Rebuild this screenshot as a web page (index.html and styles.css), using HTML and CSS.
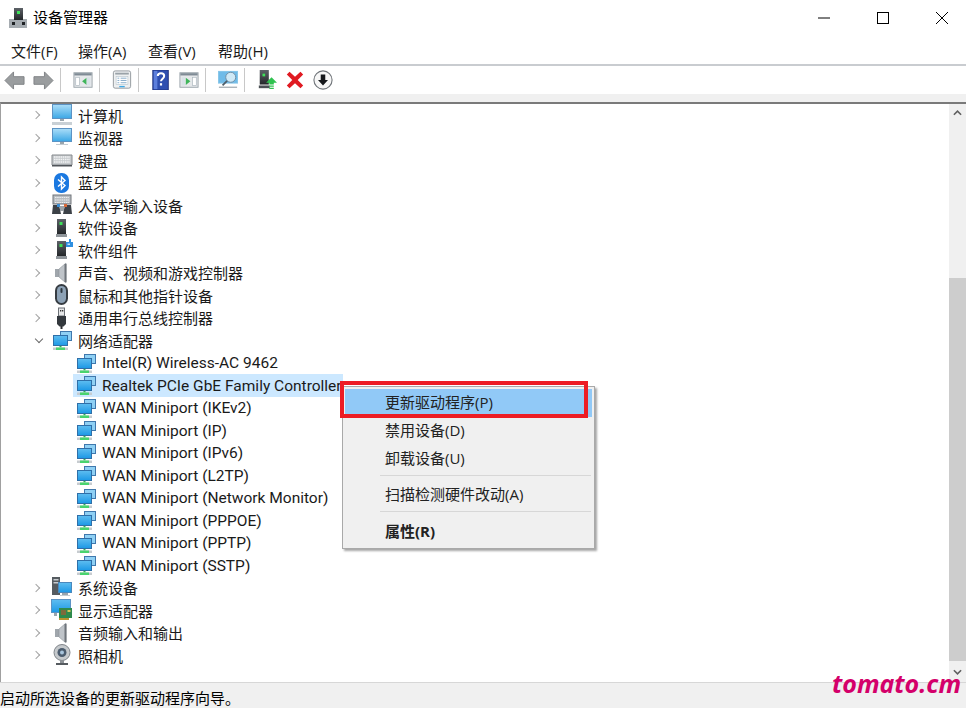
FILE: index.html
```html
<!DOCTYPE html>
<html lang="zh-CN">
<head>
<meta charset="utf-8">
<title>设备管理器</title>
<link rel="stylesheet" href="styles.css">
</head>
<body>
<svg class="defs" width="0" height="0">
  <defs>
    <linearGradient id="scr" x1="0" y1="0" x2="0" y2="1"><stop offset="0" stop-color="#a8dcf8"/><stop offset="1" stop-color="#3fa9e6"/></linearGradient>
    <linearGradient id="scr2" x1="0" y1="0" x2="0" y2="1"><stop offset="0" stop-color="#5cbcf0"/><stop offset="1" stop-color="#1f9ae6"/></linearGradient>
    <linearGradient id="tw" x1="0" y1="0" x2="0" y2="1"><stop offset="0" stop-color="#5d6268"/><stop offset="1" stop-color="#24272a"/></linearGradient>
    <symbol id="i-monitor" viewBox="0 0 22 22">
      <rect x="1" y="1" width="20" height="14" fill="#5c93c4"/><rect x="2" y="2" width="18" height="12" fill="url(#scr)"/>
      <rect x="9" y="15" width="4" height="2" fill="#9aa5ad"/><rect x="5" y="17" width="12" height="1" fill="#c4ccd2"/>
    </symbol>
    <symbol id="i-computer" viewBox="0 0 22 22">
      <rect x="1" y="0" width="20" height="15" fill="#5c93c4"/><rect x="2" y="1" width="18" height="13" fill="url(#scr)"/>
      <rect x="9" y="15" width="4" height="2" fill="#9aa5ad"/><rect x="1" y="18" width="20" height="3" fill="#c9d0d5"/>
    </symbol>
    <symbol id="i-keyboard" viewBox="0 0 22 22">
      <path d="M1 6h20v10H1z" fill="#c6cacd" stroke="#85898d"/><path d="M3 8h16M3 10.500h16M3 13h16" stroke="#f3f4f5" stroke-width="1.300" stroke-dasharray="1.500 .7"/><path d="M1 16h20v1.500H1z" fill="#50555a"/>
    </symbol>
    <symbol id="i-bt" viewBox="0 0 22 22">
      <rect x="3" y="1" width="15" height="20" rx="7" fill="#1a78e0"/><path d="M7 7.500l7 6-3.500 3.500V5l3.500 3.500-7 6" fill="none" stroke="#fff" stroke-width="1.400"/>
    </symbol>
    <symbol id="i-hid" viewBox="0 0 22 22">
      <rect x="2" y="1" width="18" height="9" fill="#b9bec2" stroke="#70757a"/><path d="M4 3.500h14M4 6h14M4 8.500h14" stroke="#eceef0" stroke-dasharray="1.500 .7"/>
      <path d="M1 20l1-9h6l2 9zM21 20l-1-9h-6l-2 9z" fill="#3c4147"/><rect x="6" y="10" width="3" height="3" fill="#3d8ed4"/><rect x="13" y="10" width="3" height="3" fill="#d86a3a"/><rect x="9" y="12" width="4" height="5" fill="#9da3a8"/>
    </symbol>
    <symbol id="i-soft" viewBox="0 0 22 22">
      <rect x="6" y="2" width="9" height="15" fill="url(#tw)"/><rect x="8.500" y="5" width="3" height="3" fill="#3fe05a"/><rect x="5" y="17" width="11" height="3" fill="#90969b"/>
    </symbol>
    <symbol id="i-comp" viewBox="0 0 22 22">
      <rect x="6" y="2" width="9" height="15" fill="url(#tw)"/><rect x="8.500" y="5" width="3" height="3" fill="#3fe05a"/><rect x="5" y="17" width="11" height="3" fill="#90969b"/>
      <path d="M15 3h3V0h2v3h2v5h-7z" fill="#2e8fe0"/><rect x="16.500" y="4.500" width="2.500" height="1.500" fill="#bfe0fa"/>
    </symbol>
    <symbol id="i-speaker" viewBox="0 0 22 22">
      <path d="M4 7h4v8H4z" fill="#a0a6ac"/><path d="M8 7l7-6v20l-7-6z" fill="#bfc4c9" stroke="#8f959b" stroke-width=".6"/><path d="M14.500 2v18" stroke="#6f757b" stroke-width="2"/>
    </symbol>
    <symbol id="i-mouse" viewBox="0 0 22 22">
      <rect x="4" y="0" width="13" height="21" rx="6.500" fill="#363c42"/><rect x="6" y="2" width="9" height="17" rx="4.500" fill="#8da2b6"/><rect x="9.500" y="4" width="2" height="5" rx="1" fill="#2f3840"/>
    </symbol>
    <symbol id="i-usb" viewBox="0 0 22 22">
      <rect x="7.500" y="1" width="6" height="8" fill="#e6e7e8" stroke="#6c7177"/><rect x="9" y="3" width="1.300" height="1.500" fill="#333"/><rect x="11" y="3" width="1.300" height="1.500" fill="#333"/>
      <path d="M6 9h9v8l-2.500 2.500h-4L6 17z" fill="#33383d"/><rect x="9.500" y="19" width="2" height="3" fill="#2a2d30"/>
    </symbol>
    <symbol id="i-net" viewBox="0 0 22 22">
      <rect x="9" y="2" width="12" height="10" fill="#3f78ad"/><rect x="10" y="3" width="10" height="8" fill="#8fd0f4"/>
      <rect x="2" y="6" width="15" height="11" fill="#2f6fa8"/><rect x="3" y="7" width="13" height="9" fill="url(#scr2)"/>
      <rect x="8.500" y="17" width="2" height="1.500" fill="#2fae52"/><rect x="2" y="18.500" width="15" height="2.500" fill="#c7ccd0"/><rect x="5" y="18.500" width="9" height="2.500" fill="#49d46e"/>
    </symbol>
    <symbol id="i-system" viewBox="0 0 22 22">
      <rect x="1" y="0" width="8" height="18" fill="#555b60"/><rect x="2.500" y="2" width="5" height="1.500" fill="#c8ccd0"/><rect x="2.500" y="5" width="5" height="1.500" fill="#c8ccd0"/>
      <rect x="7" y="5" width="14" height="11" fill="#4a88bd"/><rect x="8" y="6" width="12" height="9" fill="url(#scr2)"/><rect x="11" y="16" width="6" height="2" fill="#9aa5ad"/><rect x="9" y="18" width="10" height="1" fill="#c4ccd2"/>
    </symbol>
    <symbol id="i-display" viewBox="0 0 22 22">
      <rect x="0" y="0" width="20" height="14" fill="#5c93c4"/><rect x="1" y="1" width="18" height="12" fill="url(#scr2)"/>
      <rect x="3" y="14" width="3" height="3" fill="#9aa5ad"/><rect x="8" y="9" width="13" height="10" fill="#2f8a4c"/><rect x="10" y="11" width="5" height="5" fill="#7d6b3b"/><rect x="16.500" y="11" width="3" height="2" fill="#d5c75a"/><path d="M8 19h10v2H8z" fill="#b9932f"/>
    </symbol>
    <symbol id="i-camera" viewBox="0 0 22 22">
      <circle cx="11" cy="8.500" r="8" fill="#c5c9cc" stroke="#80858a"/><circle cx="11" cy="8.500" r="4.500" fill="#4b5c6e"/><circle cx="11" cy="8.500" r="2" fill="#a7c4dc"/>
      <path d="M9 16h4v3H9z" fill="#8d9297"/><rect x="5" y="19" width="12" height="2" fill="#565b60"/>
    </symbol>
    <symbol id="i-pane-l" viewBox="0 0 22 22">
      <rect x="1" y="3" width="20" height="16" fill="#e5e8ea" stroke="#9aa3aa"/><rect x="1.500" y="3.500" width="19" height="2.500" fill="#7f8b95"/><rect x="3" y="8" width="4" height="9" fill="#fff" stroke="#a9b4bc" stroke-width=".7"/><path d="M15 8.500v8l-5-4z" fill="#3fb55a"/><rect x="15" y="8" width="4" height="9" fill="#d9e2e8"/>
    </symbol>
    <symbol id="i-pane-r" viewBox="0 0 22 22">
      <rect x="1" y="3" width="20" height="16" fill="#e5e8ea" stroke="#9aa3aa"/><rect x="1.500" y="3.500" width="19" height="2.500" fill="#7f8b95"/><rect x="15" y="8" width="4" height="9" fill="#fff" stroke="#a9b4bc" stroke-width=".7"/><path d="M7.500 8.500v8l5-4z" fill="#3fb55a"/><rect x="3" y="8" width="3.500" height="9" fill="#d9e2e8"/>
    </symbol>
    <symbol id="i-props" viewBox="0 0 22 22">
      <rect x="1.500" y="1" width="19" height="19" rx="2" fill="#eef0f1" stroke="#8d9499"/><rect x="3.500" y="3" width="15" height="2" fill="#9aa2a8"/><rect x="4.500" y="7" width="13" height="9" fill="#fff" stroke="#b8c4cc" stroke-width=".7"/><path d="M6 9h2M9.500 9h6.500M6 11.500h2M9.500 11.500h6.500M6 14h2M9.500 14h6.500" stroke="#7da5c4"/><rect x="8" y="17.500" width="6" height="1.500" fill="#3fa9e6"/>
    </symbol>
    <symbol id="i-help" viewBox="0 0 22 22">
      <rect x="2" y="0" width="17" height="22" fill="#2f4fb0" stroke="#1d2f7a"/><rect x="3" y="1" width="4" height="20" fill="#5d7fdc"/>
      <path d="M7.500 6.500c0-4 7-4 7 0 0 3-3.500 3-3.500 6" fill="none" stroke="#fff" stroke-width="2.200"/><rect x="9.800" y="14.500" width="2.400" height="2.600" fill="#fff"/>
    </symbol>
    <symbol id="i-scan" viewBox="0 0 22 22">
      <rect x="0" y="1" width="22" height="14" fill="#8cc8ea"/><rect x="1" y="2" width="20" height="12" fill="#6fbbe8"/>
      <circle cx="14" cy="8" r="5.500" fill="#cfe9f6" stroke="#6e8aa0"/><path d="M10 12l-5 5" stroke="#4e5d68" stroke-width="2"/><path d="M1 19h20" stroke="#a9b2b8" stroke-width="1.500"/>
    </symbol>
    <symbol id="i-update" viewBox="0 0 22 22">
      <rect x="3" y="0" width="10" height="16" fill="url(#tw)"/><rect x="6" y="4" width="3" height="3" fill="#3fe05a"/><rect x="2" y="17" width="12" height="3" fill="#4b5055"/>
      <path d="M16 8l6 6h-3.500v2h-5v-2H10z" fill="#2fc24f"/><path d="M13.500 17h5v1.500h-5zM13.500 19.500h5V21h-5z" fill="#2fc24f"/>
    </symbol>
    <symbol id="i-x" viewBox="0 0 22 22">
      <path d="M2 5l3-3 6 5.500L17 2l3 3-6 6 6 6-3 3-6-5.500L5 20l-3-3 6-6z" fill="#e01a22"/>
    </symbol>
    <symbol id="i-down" viewBox="0 0 22 22">
      <circle cx="11" cy="11" r="10" fill="#f7f7f7" stroke="#70757a" stroke-width="1.200"/><path d="M8.500 5h5v6h3L11 17l-5.500-6h3z" fill="#15181b"/>
    </symbol>
  </defs>
</svg>

<div class="window">
  <header class="titlebar">
    <svg class="app-icon" viewBox="0 0 20 20"><rect x="6" y="0" width="9" height="12" fill="url(#tw)"/><rect x="9" y="3" width="3" height="3" fill="#3fe05a"/><path d="M1 11h5v1h9v-1h4v9H1z" fill="#a6acb1"/><rect x="4" y="14" width="3" height="3" fill="#1e2124"/><rect x="14" y="14" width="3" height="3" fill="#1e2124"/></svg>
    <span class="title">设备管理器</span>
    <div class="controls">
      <svg class="ctl" viewBox="0 0 12 12"><path d="M0 6h12" stroke="#000"/></svg>
      <svg class="ctl" viewBox="0 0 12 12"><rect x=".5" y=".5" width="11" height="11" fill="none" stroke="#000"/></svg>
      <svg class="ctl" viewBox="0 0 12 12"><path d="M0 0l12 12M12 0L0 12" stroke="#000"/></svg>
    </div>
  </header>
  <nav class="menubar">
    <span class="menu-item">文件(F)</span>
    <span class="menu-item">操作(A)</span>
    <span class="menu-item">查看(V)</span>
    <span class="menu-item">帮助(H)</span>
  </nav>
  <div class="toolbar">
    <svg class="arrow" viewBox="0 0 22 22"><path d="M1 11l9-9v5h11v8H10v5z" fill="#9a9d9f" stroke="#7f8285"/></svg>
    <svg class="arrow next" viewBox="0 0 22 22"><path d="M21 11l-9-9v5H1v8h11v5z" fill="#9a9d9f" stroke="#7f8285"/></svg>
    <span class="sep"></span>
    <svg class="tool"><use href="#i-pane-l"/></svg>
    <span class="sep"></span>
    <svg class="tool"><use href="#i-props"/></svg>
    <span class="sep"></span>
    <svg class="tool"><use href="#i-help"/></svg>
    <svg class="tool tight"><use href="#i-pane-r"/></svg>
    <span class="sep"></span>
    <svg class="tool"><use href="#i-scan"/></svg>
    <span class="sep"></span>
    <svg class="tool"><use href="#i-update"/></svg>
    <svg class="tool tight"><use href="#i-x"/></svg>
    <svg class="tool tight"><use href="#i-down"/></svg>
  </div>
  <div class="strip"></div>
  <main class="content">
    <ul class="tree">
      <li class="row"><span class="chev right"></span><svg class="icon"><use href="#i-computer"/></svg><span class="lbl">计算机</span></li>
      <li class="row"><span class="chev right"></span><svg class="icon"><use href="#i-monitor"/></svg><span class="lbl">监视器</span></li>
      <li class="row"><span class="chev right"></span><svg class="icon"><use href="#i-keyboard"/></svg><span class="lbl">键盘</span></li>
      <li class="row"><span class="chev right"></span><svg class="icon"><use href="#i-bt"/></svg><span class="lbl">蓝牙</span></li>
      <li class="row"><span class="chev right"></span><svg class="icon"><use href="#i-hid"/></svg><span class="lbl">人体学输入设备</span></li>
      <li class="row"><span class="chev right"></span><svg class="icon"><use href="#i-soft"/></svg><span class="lbl">软件设备</span></li>
      <li class="row"><span class="chev right"></span><svg class="icon"><use href="#i-comp"/></svg><span class="lbl">软件组件</span></li>
      <li class="row"><span class="chev right"></span><svg class="icon"><use href="#i-speaker"/></svg><span class="lbl">声音、视频和游戏控制器</span></li>
      <li class="row"><span class="chev right"></span><svg class="icon"><use href="#i-mouse"/></svg><span class="lbl">鼠标和其他指针设备</span></li>
      <li class="row"><span class="chev right"></span><svg class="icon"><use href="#i-usb"/></svg><span class="lbl">通用串行总线控制器</span></li>
      <li class="row"><span class="chev down"></span><svg class="icon"><use href="#i-net"/></svg><span class="lbl">网络适配器</span></li>
      <li class="row sub"><svg class="icon"><use href="#i-net"/></svg><span class="lbl">Intel(R) Wireless-AC 9462</span></li>
      <li class="row sub sel"><svg class="icon"><use href="#i-net"/></svg><span class="lbl">Realtek PCIe GbE Family Controller</span></li>
      <li class="row sub"><svg class="icon"><use href="#i-net"/></svg><span class="lbl">WAN Miniport (IKEv2)</span></li>
      <li class="row sub"><svg class="icon"><use href="#i-net"/></svg><span class="lbl">WAN Miniport (IP)</span></li>
      <li class="row sub"><svg class="icon"><use href="#i-net"/></svg><span class="lbl">WAN Miniport (IPv6)</span></li>
      <li class="row sub"><svg class="icon"><use href="#i-net"/></svg><span class="lbl">WAN Miniport (L2TP)</span></li>
      <li class="row sub"><svg class="icon"><use href="#i-net"/></svg><span class="lbl">WAN Miniport (Network Monitor)</span></li>
      <li class="row sub"><svg class="icon"><use href="#i-net"/></svg><span class="lbl">WAN Miniport (PPPOE)</span></li>
      <li class="row sub"><svg class="icon"><use href="#i-net"/></svg><span class="lbl">WAN Miniport (PPTP)</span></li>
      <li class="row sub"><svg class="icon"><use href="#i-net"/></svg><span class="lbl">WAN Miniport (SSTP)</span></li>
      <li class="row"><span class="chev right"></span><svg class="icon"><use href="#i-system"/></svg><span class="lbl">系统设备</span></li>
      <li class="row"><span class="chev right"></span><svg class="icon"><use href="#i-display"/></svg><span class="lbl">显示适配器</span></li>
      <li class="row"><span class="chev right"></span><svg class="icon"><use href="#i-speaker"/></svg><span class="lbl">音频输入和输出</span></li>
      <li class="row"><span class="chev right"></span><svg class="icon"><use href="#i-camera"/></svg><span class="lbl">照相机</span></li>
    </ul>
    <div class="scrollbar">
      <span class="sb-btn"><svg class="sb-arrow" viewBox="0 0 10 6"><path d="M1 5l4-4 4 4" fill="none" stroke="#606060" stroke-width="1.800"/></svg></span>
      <div class="sb-track"><div class="sb-thumb"></div></div>
      <span class="sb-btn low"><svg class="sb-arrow" viewBox="0 0 10 6"><path d="M1 1l4 4 4-4" fill="none" stroke="#606060" stroke-width="1.800"/></svg></span>
    </div>
  </main>
  <footer class="statusbar"><span>启动所选设备的更新驱动程序向导。</span></footer>
</div>

<div class="ctx">
  <div class="ctx-item hot">更新驱动程序(P)</div>
  <div class="ctx-item">禁用设备(D)</div>
  <div class="ctx-item">卸载设备(U)</div>
  <div class="ctx-sep"></div>
  <div class="ctx-item">扫描检测硬件改动(A)</div>
  <div class="ctx-sep"></div>
  <div class="ctx-item bold">属性(R)</div>
</div>
<div class="redbox"></div>
<div class="mark">tomato.cm</div>
</body>
</html>
```
FILE: styles.css
```css
* { box-sizing: border-box; }
html, body { margin: 0; height: 708px; overflow: hidden; background: #fff; }
body { font-family: "Open Sans", "Noto Sans CJK SC", sans-serif; color: #1a1a1a; font-size: 15px; }
.defs { position: absolute; }
.window { display: flex; flex-direction: column; height: 708px; width: 966px; }
.titlebar { height: 35px; display: flex; align-items: center; padding-left: 8px; flex: none; }
.app-icon { width: 20px; height: 20px; margin-right: 5px; margin-top: 0; }
.title { font-size: 15px; line-height: 20px; color: #000; font-family: "Noto Sans CJK SC", sans-serif; margin-top: -2px; }
.controls { margin-left: auto; display: flex; align-items: center; margin-right: 18px; gap: 47px; }
.ctl { width: 12px; height: 12px; display: block; }
.menubar { height: 31px; flex: none; display: flex; align-items: center; padding: 2px 0 0 11px; border-bottom: 2px solid #c9ccd0; }
.menu-item { font-size: 15px; line-height: 20px; width: 70px; }
.menu-item:first-child { width: 67px; }
.toolbar { height: 28px; flex: none; display: flex; align-items: center; padding-left: 4px; }
.arrow { width: 21px; height: 21px; display: block; }
.arrow.next { margin: 0 6px 0 8px; }
.tool { width: 20px; height: 20px; display: block; margin: 0 6px 0 12px; }
.tool:has(+ .tight) { margin-right: 0; }
.tool.tight { margin-left: 8px; }
.sep { width: 1px; height: 24px; background: #c8c8c8; flex: none; }
.strip { height: 8px; flex: none; background: #f0f0f0; }
.content { flex: 1; min-height: 0; display: flex; border-top: 2px solid #7a7a7a; border-left: 1px solid #a0a0a0; }
.tree { list-style: none; margin: 0; padding: 0; flex: 1; min-width: 0; }
.row { height: 22.5px; display: flex; align-items: center; padding-left: 32px; font-size: 15px; white-space: nowrap; position: relative; }
.row.sub { padding-left: 74px; font-family: Roboto, sans-serif; font-size: 15.500px; }
.row.sub .lbl { padding-top: 1px; }
.chev { width: 6px; height: 6px; border-right: 1.500px solid #a4a4a4; border-bottom: 1.500px solid #a4a4a4; display: block; flex: none; margin-right: 12px; }
.chev.right { transform: rotate(-45deg); }
.chev.down { transform: rotate(45deg); border-color: #6a6a6a; margin: -3px 9px 0 3px; }
.icon { width: 22px; height: 22px; flex: none; margin-right: 5px; display: block; }
.sel { width: 342px; }
.sel::before { content: ""; position: absolute; left: 72px; right: 0; top: 0; bottom: 0; background: #cce8ff; }
.sel .icon, .sel .lbl { position: relative; }
.scrollbar { width: 17px; flex: none; display: flex; flex-direction: column; background: #f0f0f0; }
.sb-btn { height: 17px; display: flex; align-items: center; justify-content: center; flex: none; }
.sb-btn.low { height: 21px; }
.sb-arrow { width: 9px; height: 6px; display: block; }
.sb-track { flex: 1; display: flex; flex-direction: column; justify-content: flex-end; }
.sb-thumb { height: 383px; background: #cdcdcd; }
.statusbar { height: 26px; flex: none; background: #f0f0f0; border-top: 1px solid #d7d7d7; display: flex; align-items: center; font-size: 15px; color: #000; padding-top: 3px; }
.ctx { position: absolute; left: 342px; top: 386px; width: 253px; height: 163px; background: #f0f0f0; border: 1px solid #a9a9a9; box-shadow: 2px 2px 2px rgba(0,0,0,.35); padding: 2px; font-size: 15px; }
.ctx-item { height: 28px; line-height: 27px; padding-left: 40px; color: #222; }
.ctx-item.hot { background: #91c9f7; }
.ctx-item.bold { font-weight: 700; }
.ctx-sep { height: 1px; background: #d7d7d7; margin: 2px 1px 5px 35px; }
.ctx-sep + .bold { margin-top: 6px; }
.redbox { position: absolute; left: 340px; top: 381px; width: 248px; height: 37px; border: 4px solid #ed1c24; }
.mark { position: absolute; left: 832px; top: 667px; font-family: "Open Sans", sans-serif; font-style: italic; font-weight: 700; font-size: 25px; line-height: 32px; color: #d4006a; }
```
